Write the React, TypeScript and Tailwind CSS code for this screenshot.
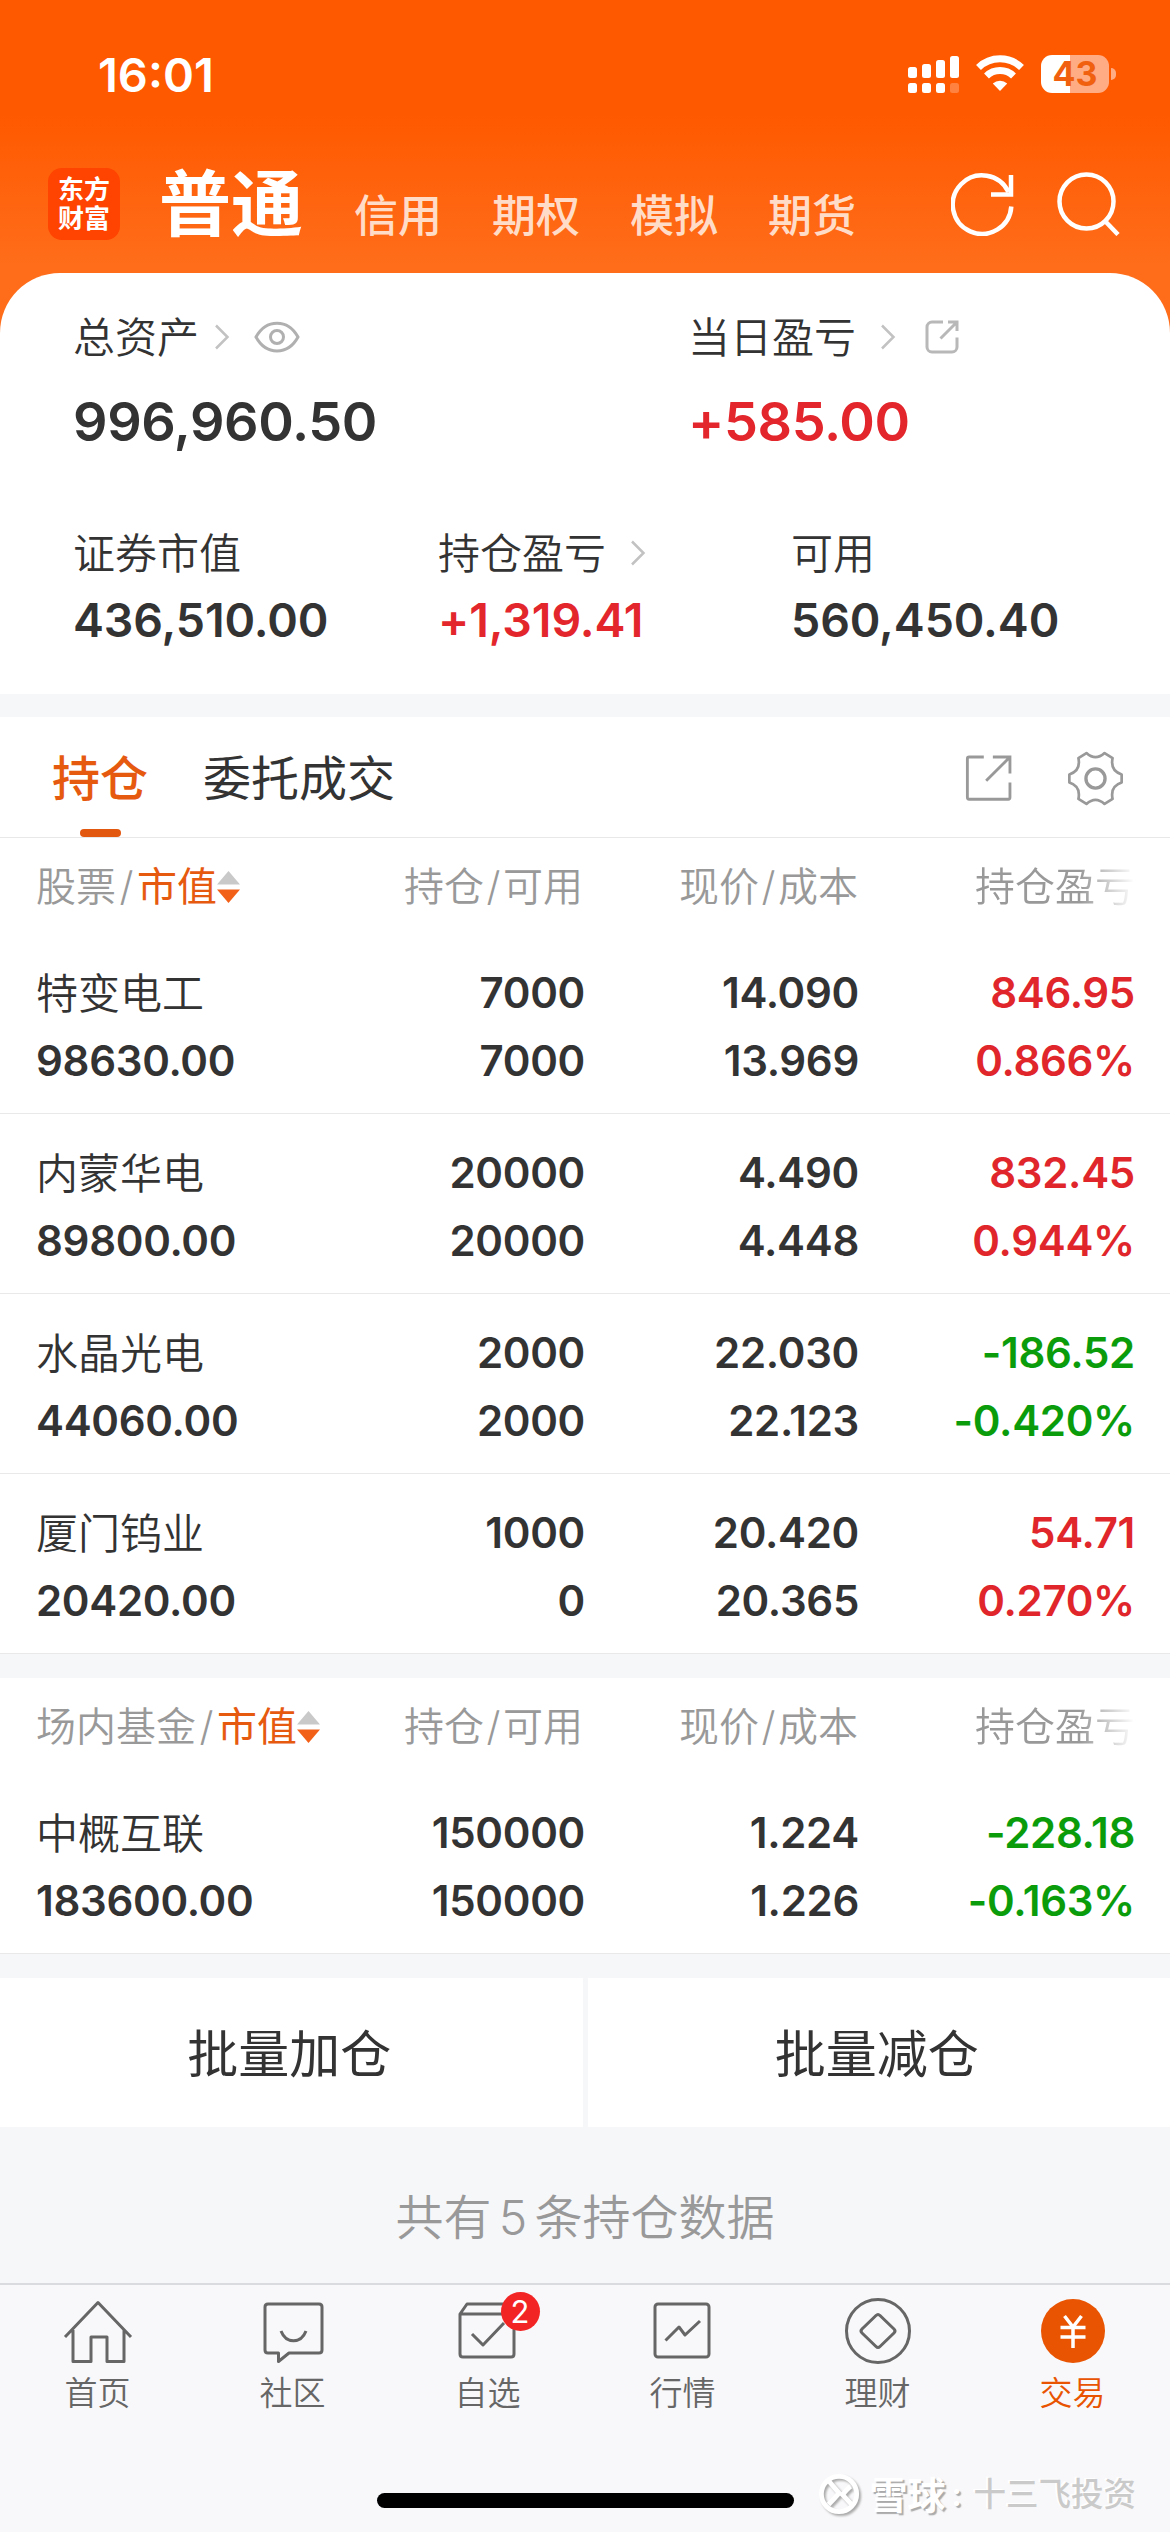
import type { ReactNode } from "react";
import clsx from "clsx";

type Holding = {
  name: string;
  value: string;
  amount: string;
  available: string;
  price: string;
  cost: string;
  profit: string;
  rate: string;
};

const stocks: Holding[] = [
  { name: "特变电工", value: "98630.00", amount: "7000", available: "7000", price: "14.090", cost: "13.969", profit: "846.95", rate: "0.866%" },
  { name: "内蒙华电", value: "89800.00", amount: "20000", available: "20000", price: "4.490", cost: "4.448", profit: "832.45", rate: "0.944%" },
  { name: "水晶光电", value: "44060.00", amount: "2000", available: "2000", price: "22.030", cost: "22.123", profit: "-186.52", rate: "-0.420%" },
  { name: "厦门钨业", value: "20420.00", amount: "1000", available: "0", price: "20.420", cost: "20.365", profit: "54.71", rate: "0.270%" },
];

const funds: Holding[] = [
  { name: "中概互联", value: "183600.00", amount: "150000", available: "150000", price: "1.224", cost: "1.226", profit: "-228.18", rate: "-0.163%" },
];

const GRID = "grid grid-cols-[300px_249px_274px_276px] pl-9";

function StatusBar() {
  return (
    <div className="flex h-[150px] items-start justify-between pl-[98px] pr-[54px] pt-[55px] text-white">
      <span className="text-[47px] font-semibold leading-[40px]">16:01</span>
      <div className="flex items-start">
        <svg width="52" height="38" viewBox="0 0 52 38" fill="currentColor">
          <rect x="0" y="12" width="9" height="11" rx="2.5" />
          <rect x="14" y="9" width="9" height="14" rx="2.5" />
          <rect x="28" y="5" width="9" height="18" rx="2.5" />
          <rect x="42" y="1" width="9" height="22" rx="2.5" />
          <rect x="0" y="28" width="9" height="10" rx="2.5" />
          <rect x="14" y="28" width="9" height="10" rx="2.5" />
          <rect x="28" y="28" width="9" height="10" rx="2.5" />
          <rect x="42" y="28" width="9" height="10" rx="2.5" opacity="0.25" />
        </svg>
        <svg className="ml-4" width="48" height="36" viewBox="0 0 48 36" fill="none" stroke="currentColor" strokeWidth="7">
          <path d="M2.5 12.5a31 31 0 0 1 43 0" />
          <path d="M10.5 21a19.5 19.5 0 0 1 27 0" />
          <path d="M24 36l-7.2-7.5a10.5 10.5 0 0 1 14.4 0z" fill="currentColor" stroke="none" />
        </svg>
        <div className="ml-[17px] flex h-[38px] w-[68px] items-center justify-center rounded-[11px] bg-[linear-gradient(90deg,#fff_43%,#ffac84_43%)] text-[34px] font-bold leading-none text-[#f0600f]">
          43
        </div>
        <div className="ml-0.5 mt-[13px] h-3 w-[5px] rounded-r-full bg-[#ffac84]" />
      </div>
    </div>
  );
}

function TopNav() {
  return (
    <div className="flex h-[108px] items-center pl-12">
      <div className="flex size-[72px] flex-col items-center justify-center rounded-[14px] bg-[#ff4300] text-[26px] font-bold leading-[29px] text-white">
        <span>东方</span>
        <span>财富</span>
      </div>
      <span className="ml-[39px] text-[72px] font-bold leading-none text-white">普通</span>
      <div className="ml-[51px] flex gap-[50px] pt-[24px] text-[44px] font-medium leading-none text-[#ffdcc7]">
        <span>信用</span>
        <span>期权</span>
        <span>模拟</span>
        <span>期货</span>
      </div>
      <svg className="ml-[95px] text-white" width="64" height="64" viewBox="0 0 64 64" fill="none" stroke="currentColor" strokeWidth="4.5">
        <path d="M60.3 34.5A29.3 29.3 0 1 1 57.5 20" />
        <path d="M60 3v19.500H40" />
      </svg>
      <svg className="ml-[41px] text-white" width="64" height="64" viewBox="0 0 64 64" fill="none" stroke="currentColor" strokeWidth="4.5">
        <circle cx="30.500" cy="29.500" r="27" />
        <path d="M49 49l13 13.500" />
      </svg>
    </div>
  );
}

function Chevron({ className }: { className?: string }) {
  return (
    <svg className={className} width="16" height="26" viewBox="0 0 16 26" fill="none" stroke="#c2c2c2" strokeWidth="2.5">
      <path d="M2 1.500L13.500 13L2 24.500" />
    </svg>
  );
}

function Metric({ label, value, large, up, children }: { label: string; value: string; large?: boolean; up?: boolean; children?: ReactNode }) {
  return (
    <div>
      <div className="flex h-[42px] items-center text-[42px] font-[350] leading-none">
        <span className="pt-0.5">{label}</span>
        {children}
      </div>
      <div
        className={clsx(
          "font-semibold",
          large ? "mt-9 text-[54px] leading-[55px] tracking-[-0.4px]" : "mt-[22px] text-[46.5px] leading-[48px] tracking-[-0.1px]",
          up && "text-[#e3262c]",
        )}
      >
        {value}
      </div>
    </div>
  );
}

function Summary() {
  return (
    <div className="bg-[#ff6d1a]">
      <div className="h-[421px] rounded-t-[60px] bg-white pl-[73px] pt-[43px]">
        <div className="grid grid-cols-[615px_1fr]">
          <Metric label="总资产" value="996,960.50" large>
            <Chevron className="ml-[15px]" />
            <svg className="ml-6" width="46" height="32" viewBox="0 0 46 32" fill="none" stroke="#b0b0b0" strokeWidth="3">
              <path d="M2 16C12 -2.500 34 -2.500 44 16C34 34.500 12 34.500 2 16Z" />
              <circle cx="23" cy="16" r="6.500" />
            </svg>
          </Metric>
          <Metric label="当日盈亏" value="+585.00" large up>
            <Chevron className="ml-[24px]" />
            <svg className="ml-[29px]" width="34" height="34" viewBox="0 0 34 34" fill="none" stroke="#b8b8b8" strokeWidth="3">
              <path d="M18 2H7a5 5 0 0 0-5 5v20a5 5 0 0 0 5 5h20a5 5 0 0 0 5-5V17.500" />
              <path d="M23 2h9v9M32 2L15.500 18.500" />
            </svg>
          </Metric>
        </div>
        <div className="mt-[83px] grid grid-cols-[365px_353px_1fr]">
          <Metric label="证券市值" value="436,510.00" />
          <Metric label="持仓盈亏" value="+1,319.41" up>
            <Chevron className="ml-6" />
          </Metric>
          <Metric label="可用" value="560,450.40" />
        </div>
      </div>
    </div>
  );
}

function Tabs() {
  return (
    <div className="flex h-[121px] items-stretch border-b border-[#e8e8e8] bg-white pl-[52px] text-[48px] leading-none">
      <div className="flex flex-col items-center justify-between pt-[38px] font-medium text-[#e65a10]">
        <span>持仓</span>
        <span className="h-2 w-[41px] rounded-[4px] bg-[#e2580f]" />
      </div>
      <span className="ml-[55px] pt-[38px]">委托成交</span>
      <div className="ml-auto flex items-start pr-[46px] pt-[33px]">
        <svg width="57" height="57" viewBox="57 60 170 170" fill="none" stroke="#999" strokeWidth="8.5">
          <path d="M128 81H84q-5 0-5 5v115q0 6 5 6h117q5 0 5-6V157" />
          <path d="M206 130V81H155M206 81L135 152" />
        </svg>
        <svg className="ml-[50px]" width="57" height="57" viewBox="380 60 170 170" fill="none" stroke="#999" strokeWidth="8" strokeLinejoin="round">
          <path d="M438 69Q465 94 492 69L516 84Q508 122 543 133V157Q508 168 516 206L492 221Q465 196 438 221L414 206Q422 168 387 157V133Q422 122 414 84Z" />
          <circle cx="465" cy="145" r="28.500" strokeWidth="10" />
        </svg>
      </div>
    </div>
  );
}

function TableHead({ label }: { label: string }) {
  return (
    <div className={clsx(GRID, "h-24 items-center pt-0.5 text-[40px] font-[350] leading-none text-[#999]")}>
      <div className="flex items-center whitespace-nowrap">
        {label}
        <span className="w-[21px] text-center">/</span>
        <span className="font-normal text-[#e65a10]">市值</span>
        <svg width="23" height="34" viewBox="0 0 23 34">
          <path d="M11.500 1L23 14.500H0z" fill="#c9c9c9" />
          <path d="M11.500 33L0 19.500H23z" fill="#f26018" />
        </svg>
      </div>
      <div className="flex justify-end pr-0.5">
        持仓<span className="w-[19px] text-center">/</span>可用
      </div>
      <div className="flex justify-end pr-px">
        现价<span className="w-[19px] text-center">/</span>成本
      </div>
      <div className="whitespace-nowrap text-right [mask-image:linear-gradient(90deg,#000_80%,transparent_100%)]">持仓盈亏</div>
    </div>
  );
}

function Cell({ top, bottom, className }: { top: string; bottom: string; className?: string }) {
  return (
    <div className={clsx("flex flex-col gap-[25px] text-right font-semibold tracking-[-0.3px]", className)}>
      <span>{top}</span>
      <span>{bottom}</span>
    </div>
  );
}

function HoldingRow({ item }: { item: Holding }) {
  const down = item.profit.startsWith("-");
  return (
    <div className={clsx(GRID, "h-[180px] border-b border-[#e9e9e9] pt-[37px] text-[42px] leading-[43px]")}>
      <div className="flex flex-col gap-[25px]">
        <span className="relative top-px font-[350]">{item.name}</span>
        <span className="font-semibold tracking-[-0.3px]">{item.value}</span>
      </div>
      <Cell top={item.amount} bottom={item.available} />
      <Cell top={item.price} bottom={item.cost} />
      <Cell top={item.profit} bottom={item.rate} className={down ? "text-[#0b9c0b]" : "text-[#e0262b]"} />
    </div>
  );
}

function HoldingTable({ label, items }: { label: string; items: Holding[] }) {
  return (
    <div className="bg-white">
      <TableHead label={label} />
      {items.map((item) => (
        <HoldingRow key={item.name} item={item} />
      ))}
    </div>
  );
}

function TabItem({ label, active, badge, children }: { label: string; active?: boolean; badge?: string; children: ReactNode }) {
  return (
    <div className={clsx("flex flex-1 flex-col items-center gap-[10px]", active ? "text-[#e85402]" : "text-[#666]")}>
      <div className="relative">
        <svg width="72" height="72" viewBox="0 0 72 72" fill="none" stroke="currentColor" strokeWidth="3" strokeLinejoin="round">
          {children}
        </svg>
        {badge && (
          <span className="absolute -top-[3px] left-[49px] flex size-[39px] items-center justify-center rounded-full bg-[#f32424] text-[31px] leading-none text-white">
            {badge}
          </span>
        )}
      </div>
      <span className="text-[33px] font-[350] leading-none">{label}</span>
    </div>
  );
}

function TabBar() {
  return (
    <div className="h-[249px] border-t-2 border-[#d9dbde] bg-[#f8f8fa] pt-2.5">
      <div className="flex">
        <TabItem label="首页">
          <path d="M3 42L36 7.500L69 42M11 35v31.500h18V42h16v24.500h17V35" />
        </TabItem>
        <TabItem label="社区">
          <path d="M11 9h51q3 0 3 3v43q0 3-3 3H32l-10.500 8.500V58H11q-3 0-3-3V12q0-3 3-3z" />
          <path d="M24 36c5 13 20 13 25 0" />
        </TabItem>
        <TabItem label="自选" badge="2">
          <path d="M8 19L15 9H56L62 19V59q0 3-3 3H11q-3 0-3-3zM8 19H62" />
          <path d="M20 39l11 11L52 28" />
        </TabItem>
        <TabItem label="行情">
          <rect x="8" y="9" width="54" height="53" rx="3" />
          <path d="M18.500 45.500L32 32l6 8L53 26" />
        </TabItem>
        <TabItem label="理财">
          <circle cx="36" cy="36" r="31.500" />
          <path d="M34 20.500q2-2 4 0L52 34q2 2 0 4L38 51.500q-2 2-4 0L20 38q-2-2 0-4z" />
        </TabItem>
        <TabItem label="交易" active>
          <circle cx="36" cy="36" r="32" fill="currentColor" stroke="none" />
          <path stroke="#fff" strokeWidth="3.500" strokeLinejoin="miter" d="M27.500 21L36 32L44.500 21M36 32v21M23.500 32.500h25M23.500 42h25" />
        </TabItem>
      </div>
      <div className="mx-auto mt-[83px] h-[15px] w-[417px] rounded-full bg-black" />
    </div>
  );
}

function Watermark() {
  return (
    <div className="absolute bottom-[16px] right-[34px] flex items-center whitespace-nowrap leading-none">
      <svg className="mr-2 [filter:drop-shadow(2px_2px_1px_#aaa)]" width="42" height="42" viewBox="0 0 44 44" fill="none" stroke="#fff" strokeWidth="5">
        <circle cx="21" cy="21" r="18.500" />
        <path d="M10 7L21 20Q15 27 10 32M33 13Q27 18 25 22L36 34" />
      </svg>
      <span className="text-[38px] font-bold text-white [text-shadow:2px_2px_1px_#aaa]">雪球</span>
      <span className="w-[28px] pl-1.5 text-[32px] font-semibold text-white [text-shadow:2px_2px_1px_#aaa]">:</span>
      <span className="text-[32.5px] font-medium text-[#cacaca] [text-shadow:-2px_-1px_0_#fff]">十三飞投资</span>
    </div>
  );
}

export default function App() {
  return (
    <div className="relative h-[2532px] w-[1170px] overflow-hidden bg-[#f6f7f9] font-['Inter','Noto_Sans_CJK_SC',sans-serif] text-[#333]">
      <div className="h-[273px] bg-[linear-gradient(180deg,#ff5900_0px,#ff5900_115px,#ff6d1a_265px)]">
        <StatusBar />
        <TopNav />
      </div>
      <Summary />
      <div className="mt-[23px]">
        <Tabs />
        <HoldingTable label="股票" items={stocks} />
      </div>
      <div className="mt-6">
        <HoldingTable label="场内基金" items={funds} />
      </div>
      <div className="mt-6 grid h-[150px] grid-cols-2 gap-[5px] pb-px text-[51px] leading-none">
        <div className="flex items-center justify-center bg-white pr-1 pt-1">批量加仓</div>
        <div className="flex items-center justify-center bg-white pr-1 pt-1">批量减仓</div>
      </div>
      <div className="flex h-[155px] items-center justify-center pt-[25px] text-[48px] font-[350] leading-none text-[#999]">
        共有<span className="w-[43px] text-center">5</span>条持仓数据
      </div>
      <TabBar />
      <Watermark />
    </div>
  );
}
